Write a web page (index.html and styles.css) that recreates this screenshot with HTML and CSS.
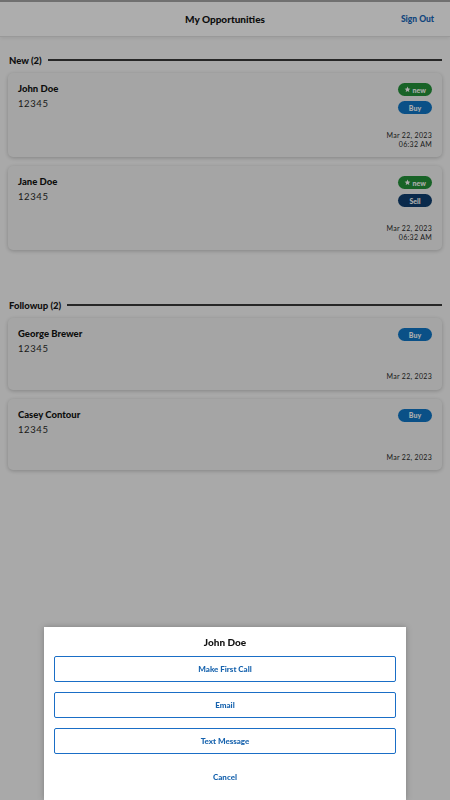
FILE: index.html
```html
<!DOCTYPE html>
<html>
<head>
<meta charset="utf-8">
<link rel="stylesheet" href="styles.css">
</head>
<body>
<header class="topbar">
  <div class="topbar-spacer"></div>
  <h1 class="topbar-title">My Opportunities</h1>
  <a class="signout">Sign Out</a>
</header>

<main class="content">
  <section class="group group-new">
    <div class="group-head"><span class="group-title">New (2)</span><span class="group-rule"></span></div>
    <div class="cards">
      <article class="card">
        <div class="card-top">
          <div class="who"><div class="name">John Doe</div><div class="num">12345</div></div>
          <div class="badges">
            <span class="badge badge-new"><svg class="star" viewBox="0 0 24 24"><path d="M12 2l2.9 6.6 7.1.6-5.4 4.7 1.6 7L12 17.3 5.8 20.9l1.6-7L2 9.2l7.1-.6z"/></svg>new</span>
            <span class="badge badge-buy">Buy</span>
          </div>
        </div>
        <div class="date">Mar 22, 2023<br>06:32 AM</div>
      </article>
      <article class="card">
        <div class="card-top">
          <div class="who"><div class="name">Jane Doe</div><div class="num">12345</div></div>
          <div class="badges">
            <span class="badge badge-new"><svg class="star" viewBox="0 0 24 24"><path d="M12 2l2.9 6.6 7.1.6-5.4 4.7 1.6 7L12 17.3 5.8 20.9l1.6-7L2 9.2l7.1-.6z"/></svg>new</span>
            <span class="badge badge-sell">Sell</span>
          </div>
        </div>
        <div class="date">Mar 22, 2023<br>06:32 AM</div>
      </article>
    </div>
  </section>

  <section class="group">
    <div class="group-head"><span class="group-title">Followup (2)</span><span class="group-rule"></span></div>
    <div class="cards">
      <article class="card">
        <div class="card-top">
          <div class="who"><div class="name">George Brewer</div><div class="num">12345</div></div>
          <div class="badges"><span class="badge badge-buy">Buy</span></div>
        </div>
        <div class="date">Mar 22, 2023</div>
      </article>
      <article class="card">
        <div class="card-top">
          <div class="who"><div class="name">Casey Contour</div><div class="num">12345</div></div>
          <div class="badges"><span class="badge badge-buy">Buy</span></div>
        </div>
        <div class="date">Mar 22, 2023</div>
      </article>
    </div>
  </section>
</main>

<div class="scrim"></div>
<div class="sheet">
  <div class="sheet-title">John Doe</div>
  <button class="sheet-btn">Make First Call</button>
  <button class="sheet-btn">Email</button>
  <button class="sheet-btn">Text Message</button>
  <button class="sheet-btn sheet-cancel">Cancel</button>
</div>
</body>
</html>
```

FILE: styles.css
```css
* { box-sizing: border-box; }
html, body { margin: 0; padding: 0; }
body {
  background: #fafafa;
  font-family: Lato, "Noto Sans", sans-serif;
  color: #1a1a1a;
  width: 450px;
  height: 800px;
  overflow: hidden;
}
.topbar {
  height: 37px;
  background: #ffffff;
  border-top: 2px solid #a5a5a5;
  border-bottom: 1px solid #e2e2e2;
  box-shadow: 0 2px 3px rgba(0,0,0,0.06);
  display: flex;
  align-items: center;
  padding: 0 16px 0 16px;
}
.topbar-spacer { width: 40px; }
.topbar-title {
  flex: 1;
  margin: 0;
  text-align: center;
  font-size: 10px;
  font-weight: 900;
  color: #141414;
}
.signout {
  width: 40px;
  text-align: right;
  font-size: 8.5px;
  font-weight: 900;
  color: #1766b8;
}
.content { padding: 16px 8px 0 8px; }
.group-new { margin-bottom: 48px; }
.group-head {
  display: flex;
  align-items: center;
  height: 14px;
  margin-bottom: 6px;
  padding-left: 1px;
}
.group-title {
  font-size: 9.5px;
  font-weight: 900;
  color: #151515;
  white-space: nowrap;
}
.group-rule {
  flex: 1;
  height: 1.5px;
  background: #3a3a3a;
  margin-left: 6px;
}
.cards { display: flex; flex-direction: column; gap: 9px; }
.card {
  background: #f3f4f3;
  border-radius: 5px;
  box-shadow: 0 1px 4px rgba(0,0,0,0.22);
  padding: 10px 10px 9px 10px;
}
.card-top {
  display: flex;
  justify-content: space-between;
  align-items: flex-start;
}
.name {
  font-size: 9.5px;
  font-weight: 900;
  line-height: 12px;
  color: #141414;
}
.num {
  font-size: 9.5px;
  line-height: 12px;
  margin-top: 3px;
  letter-spacing: 0.6px;
  color: #2a2a2a;
}
.badges {
  display: flex;
  flex-direction: column;
  align-items: flex-end;
  gap: 5px;
}
.badge {
  display: inline-flex;
  align-items: center;
  justify-content: center;
  width: 34px;
  height: 13px;
  border-radius: 7px;
  color: #ffffff;
  font-size: 7px;
  font-weight: 900;
}
.badge-new { background: #24923a; }
.badge-buy { background: #0f77c8; }
.badge-sell { background: #103f70; }
.star { width: 7px; height: 7px; fill: #ffffff; margin-right: 1.5px; }
.date {
  margin-top: 17px;
  text-align: right;
  font-size: 7px;
  line-height: 8.5px;
  letter-spacing: 0.3px;
  color: #2a2a2a;
}
.scrim {
  position: fixed;
  inset: 0;
  background: rgba(0,0,0,0.32);
}
.sheet {
  position: fixed;
  left: 44px;
  right: 44px;
  bottom: 0;
  height: 173px;
  background: #ffffff;
  box-shadow: 0 0 6px rgba(0,0,0,0.25);
  padding: 8px 10px 10px 10px;
  display: flex;
  flex-direction: column;
  gap: 10px;
}
.sheet-title {
  text-align: center;
  font-size: 10px;
  font-weight: 900;
  line-height: 14px;
  color: #111;
  margin-bottom: -3px;
}
.sheet-btn {
  height: 26px;
  border: 1.5px solid #1a6ec6;
  border-radius: 2px;
  background: #ffffff;
  color: #1763ae;
  font-family: Lato, "Noto Sans", sans-serif;
  font-size: 8px;
  font-weight: 900;
  padding: 0;
}
.sheet-cancel { border-color: transparent; }
```
